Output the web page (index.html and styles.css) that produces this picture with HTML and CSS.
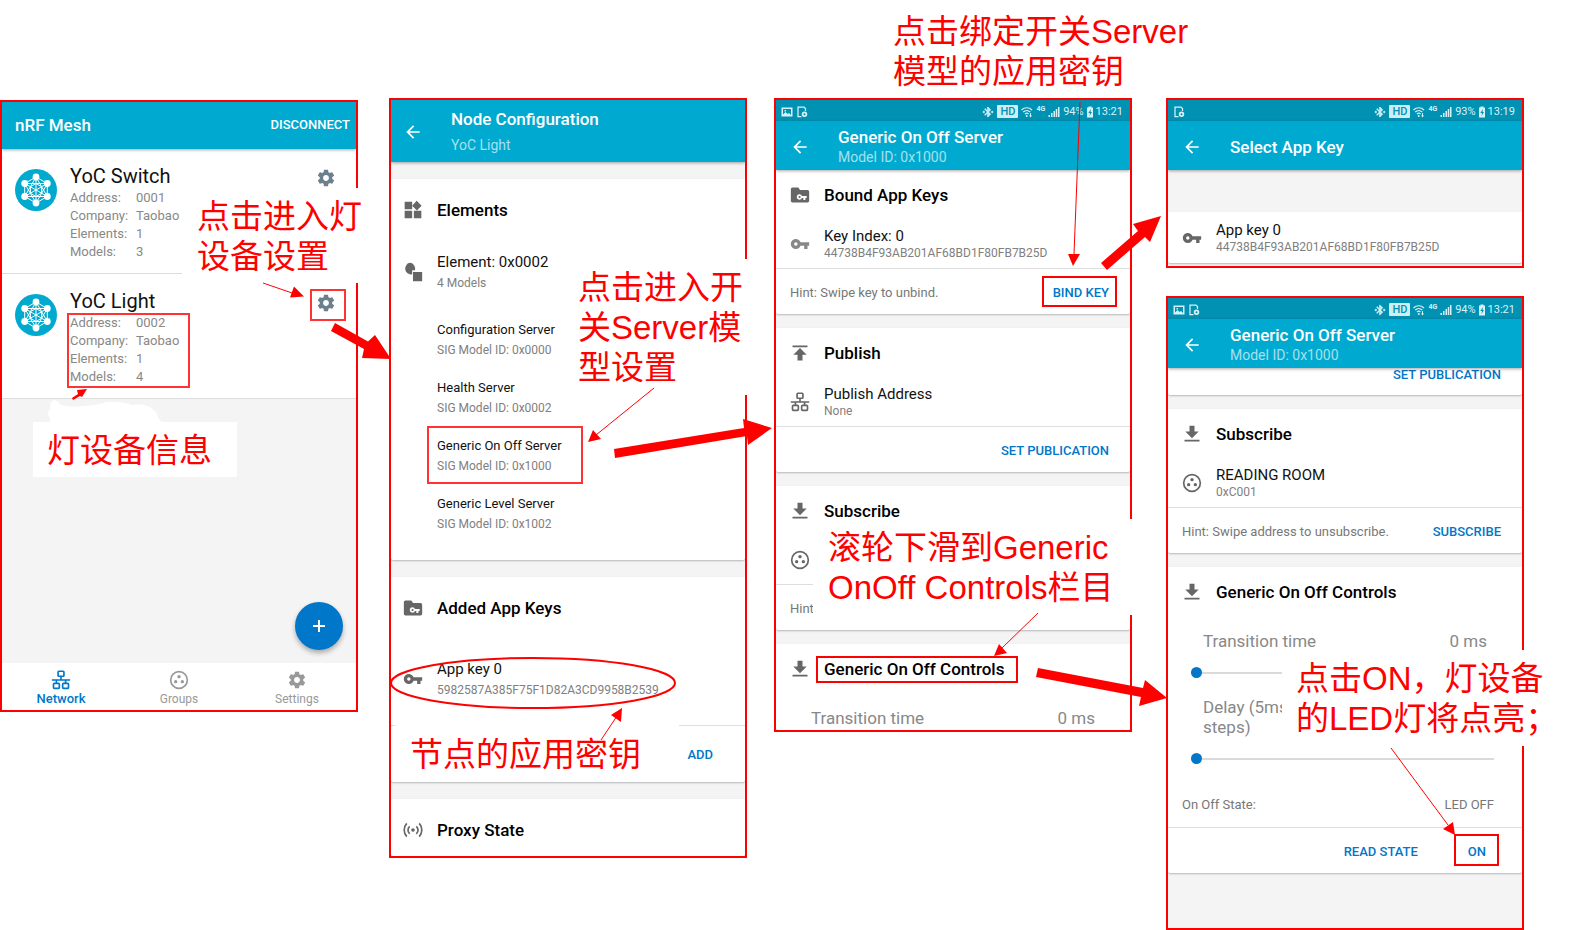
FILE: index.html
```html
<!DOCTYPE html>
<html lang="zh-CN">
<head>
<meta charset="utf-8">
<title>nRF Mesh 操作流程</title>
<link rel="stylesheet" href="styles.css">
</head>
<body>
<svg class="sprite" aria-hidden="true">
  <symbol id="gear" viewBox="0 0 24 24"><path d="M19.43 12.98c.04-.32.07-.64.07-.98s-.03-.66-.07-.98l2.11-1.65c.19-.15.24-.42.12-.64l-2-3.46c-.12-.22-.39-.3-.61-.22l-2.49 1c-.52-.4-1.08-.73-1.69-.98l-.38-2.65C14.46 2.18 14.25 2 14 2h-4c-.25 0-.46.18-.49.42l-.38 2.65c-.61.25-1.17.59-1.69.98l-2.49-1c-.23-.09-.49 0-.61.22l-2 3.46c-.13.22-.07.49.12.64l2.11 1.65c-.04.32-.07.65-.07.98s.03.66.07.98l-2.11 1.65c-.19.15-.24.42-.12.64l2 3.46c.12.22.39.3.61.22l2.49-1c.52.4 1.08.73 1.69.98l.38 2.65c.03.24.24.42.49.42h4c.25 0 .46-.18.49-.42l.38-2.65c.61-.25 1.17-.59 1.69-.98l2.49 1c.23.09.49 0 .61-.22l2-3.46c.12-.22.07-.49-.12-.64l-2.11-1.65zM12 15.5c-1.93 0-3.5-1.57-3.5-3.5s1.57-3.5 3.5-3.5 3.5 1.57 3.5 3.5-1.57 3.5-3.5 3.5z"/></symbol>
  <symbol id="key" viewBox="0 0 24 24"><path d="M12.65 10C11.83 7.67 9.61 6 7 6c-3.31 0-6 2.69-6 6s2.69 6 6 6c2.61 0 4.83-1.67 5.65-4H17v4h4v-4h2v-4H12.65zM7 14c-1.1 0-2-.9-2-2s.9-2 2-2 2 .9 2 2-.9 2-2 2z"/></symbol>
  <symbol id="folder-key" viewBox="0 0 24 24"><path fill-rule="evenodd" d="M3 3h7l2 3h9a2 2 0 0 1 2 2v11a2 2 0 0 1-2 2H3a2 2 0 0 1-2-2V5a2 2 0 0 1 2-2zm8.500 8a3.300 3.300 0 1 0 2.900 4.600H16V18h2.500v-2.400H20V13.200h-5.600A3.300 3.300 0 0 0 11.500 11zm0 2.100a1.300 1.300 0 1 1 0 2.600 1.300 1.300 0 0 1 0-2.600z"/></symbol>
  <symbol id="widgets" viewBox="0 0 24 24"><path d="M13 13v9h9v-9h-9zM2 22h9v-9H2v9zM2 2v9h9V2H2zm14.660-1.310L11 6.840 16.660 12.500l5.660-5.660-5.660-5.650z"/></symbol>
  <symbol id="shapes" viewBox="0 0 24 24"><path d="M8 1a6.500 7 0 0 1 6.300 9H11v4.600A6.500 7 0 1 1 8 1zM12 12h11v11H12z"/></symbol>
  <symbol id="publish" viewBox="0 0 24 24"><path d="M3 3v2h18V3H3zm1 11h5v7h6v-7h5l-8-8-8 8z"/></symbol>
  <symbol id="download" viewBox="0 0 24 24"><path d="M20 9h-5V2H9v7H4l8 8 8-8zM3 19v2h18v-2H3z"/></symbol>
  <symbol id="back" viewBox="0 0 24 24"><path d="M20 11H7.830l5.590-5.590L12 4l-8 8 8 8 1.410-1.410L7.830 13H20v-2z"/></symbol>
  <symbol id="network" viewBox="0 0 24 24"><g fill="none" stroke="currentColor" stroke-width="2"><rect x="8.500" y="1.500" width="7" height="6" rx="1"/><path d="M12 7.500V12M1 12h22M6.500 12v4M17.500 12v4"/><rect x="3" y="16" width="7" height="6" rx="1"/><rect x="14" y="16" width="7" height="6" rx="1"/></g></symbol>
  <symbol id="groups" viewBox="0 0 24 24"><circle cx="12" cy="12" r="10" fill="none" stroke="currentColor" stroke-width="2"/><circle cx="12" cy="8" r="2"/><circle cx="8" cy="14" r="2"/><circle cx="16" cy="14" r="2"/></symbol>
  <symbol id="proxy" viewBox="0 0 24 24"><circle cx="12" cy="12" r="2.200"/><path fill="none" stroke="currentColor" stroke-width="2" d="M8 7.500a6 6 0 0 0 0 9M16 7.500a6 6 0 0 1 0 9M4.500 4a12 12 0 0 0 0 16M19.500 4a12 12 0 0 1 0 16"/></symbol>
  <symbol id="picture" viewBox="0 0 24 24"><path fill-rule="evenodd" d="M1 3h22v18H1zm3 3v11l5-5 4 4 3-2 4 4V6zm3 2h3v3H7z"/></symbol>
  <symbol id="device" viewBox="0 0 24 24"><path fill="none" stroke="currentColor" stroke-width="2.500" d="M19 10V5l-3-3H4v19h7"/><path fill-rule="evenodd" d="M17 11a5.500 5.500 0 1 1 0 11 5.500 5.500 0 0 1 0-11zm0 3.500a2 2 0 1 0 0 4 2 2 0 0 0 0-4z"/></symbol>
  <symbol id="bluetooth" viewBox="0 0 24 24"><path stroke="currentColor" d="M17.710 7.710L12 2h-1v7.590L6.410 5 5 6.410 10.590 12 5 17.590 6.410 19 11 14.410V22h1l5.710-5.710-4.300-4.290 4.300-4.290zM13 5.830l1.880 1.880L13 9.590V5.830zm1.880 10.460L13 18.170v-3.760l1.880 1.880zM2 10.500h3v3H2zM19 10.500h3v3h-3z"/></symbol>
  <symbol id="wifi" viewBox="0 0 24 24"><path fill="none" stroke="currentColor" stroke-width="2.400" d="M1 8c6-6 15-6 21 0M4.500 12c4-4 10-4 14 0M8 16c2-2 5-2 7 0"/><circle cx="11.500" cy="20" r="2"/><path d="M18 14h2v5h2l-3 4-3-4h2z"/></symbol>
  <symbol id="signal" viewBox="0 0 24 24"><path d="M1 18h3v4H1zM6 14h3v8H6zM11 10h3v12h-3zM15.500 6h3v16h-3zM20 2h3v20h-3z"/></symbol>
  <symbol id="battery" viewBox="0 0 12 24"><path fill-rule="evenodd" d="M3 1h6v2h3v20H0V3h3zm5 5l-5.500 8H6l-1 6 5-8H7z"/></symbol>
  <symbol id="mesh" viewBox="0 0 42 42"><circle cx="21" cy="21" r="21" fill="#00a9ce"/><g fill="none" stroke="#fff" stroke-width="1"><path d="M21 8l11.300 6.500v13L21 34 9.700 27.500v-13zM21 8l11.300 19.500H9.700zM21 34L9.700 14.500h22.600zM21 8v26M9.700 14.500l22.600 13M32.300 14.500l-22.600 13"/><path d="M21 14.500l5.600 3.200v6.600L21 27.500l-5.600-3.200v-6.600z"/></g><g fill="#fff"><circle cx="21" cy="8" r="3.400"/><circle cx="32.300" cy="14.500" r="3.400"/><circle cx="32.300" cy="27.500" r="3.400"/><circle cx="21" cy="34" r="3.400"/><circle cx="9.700" cy="27.500" r="3.400"/><circle cx="9.700" cy="14.500" r="3.400"/></g></symbol>
</svg>

<main class="board">

  <section class="column column-network">
    <div class="phone">
      <header class="bar bar-home"><h1 class="bar-title">nRF Mesh</h1><button class="bar-action">DISCONNECT</button></header>
      <article class="node">
        <svg class="avatar"><use href="#mesh"/></svg>
        <div class="node-body">
          <h2 class="node-name">YoC Switch</h2>
          <dl class="facts"><dt>Address:</dt><dd>0001</dd><dt>Company:</dt><dd>Taobao</dd><dt>Elements:</dt><dd>1</dd><dt>Models:</dt><dd>3</dd></dl>
        </div>
        <button class="gear" aria-label="Configure YoC Switch"><svg class="icon"><use href="#gear"/></svg></button>
      </article>
      <article class="node">
        <svg class="avatar"><use href="#mesh"/></svg>
        <div class="node-body">
          <h2 class="node-name">YoC Light</h2>
          <dl class="facts"><dt>Address:</dt><dd>0002</dd><dt>Company:</dt><dd>Taobao</dd><dt>Elements:</dt><dd>1</dd><dt>Models:</dt><dd>4</dd></dl>
        </div>
        <button class="gear" aria-label="Configure YoC Light"><svg class="icon"><use href="#gear"/></svg></button>
      </article>
      <div class="blank">
        <button class="fab" aria-label="Add node"><svg class="fab-plus" viewBox="0 0 14 14"><path d="M7 1v12M1 7h12" stroke="#fff" stroke-width="2"/></svg></button>
      </div>
      <nav class="tabs">
        <a class="tab tab-on" href="#network"><svg class="icon"><use href="#network"/></svg>Network</a>
        <a class="tab" href="#groups"><svg class="icon"><use href="#groups"/></svg>Groups</a>
        <a class="tab" href="#settings"><svg class="icon"><use href="#gear"/></svg>Settings</a>
      </nav>
    </div>
    <p class="note note-enter">点击进入灯<br>设备设置</p>
    <p class="note note-info">灯设备信息</p>
    <svg class="marks" width="358" height="930" viewBox="0 0 358 930">
      <path class="smudge" d="M50 423v-5q-4-4 0-9 0-8 4-9 5 1 6 5 12 3 24 1 14-1 22-4 14-1 26 3 16-2 23 6 3 5 3 7 3 2 4 5z"/>
      <rect class="frame soft" x="311" y="290" width="34" height="30"/>
      <rect class="frame soft" x="68" y="314" width="121" height="73"/>
      <path class="line" d="M263 283l32 11"/><path class="head" d="M304 296.500l-14 1 4-11z"/>
      <path class="head" d="M73 400l-1-2 6-4-1-4 10-1-5 8-2-1z"/>
      <path class="head" d="M335 323l33 18.500 7-6.500 16 24-29-1 2-9-33-18z"/>
    </svg>
  </section>

  <section class="column column-node">
    <div class="phone roomy">
      <header class="bar bar-tall"><button class="back" aria-label="Back"><svg class="icon"><use href="#back"/></svg></button><div class="bar-text"><h1 class="bar-title">Node Configuration</h1><p class="bar-sub">YoC Light</p></div></header>
      <div class="card">
        <div class="card-head"><svg class="icon"><use href="#widgets"/></svg><h2>Elements</h2></div>
        <div class="item item-element"><svg class="icon"><use href="#shapes"/></svg><div><p class="primary">Element: 0x0002</p><p class="secondary">4 Models</p></div></div>
        <ul class="models">
          <li><p class="model">Configuration Server</p><p class="secondary">SIG Model ID: 0x0000</p></li>
          <li><p class="model">Health Server</p><p class="secondary">SIG Model ID: 0x0002</p></li>
          <li><p class="model">Generic On Off Server</p><p class="secondary">SIG Model ID: 0x1000</p></li>
          <li><p class="model">Generic Level Server</p><p class="secondary">SIG Model ID: 0x1002</p></li>
        </ul>
      </div>
      <div class="card">
        <div class="card-head"><svg class="icon"><use href="#folder-key"/></svg><h2>Added App Keys</h2></div>
        <div class="item item-key"><svg class="icon"><use href="#key"/></svg><div><p class="primary">App key 0</p><p class="secondary">5982587A385F75F1D82A3CD9958B2539</p></div></div>
        <div class="card-foot"><button class="action">ADD</button></div>
      </div>
      <div class="card card-cut">
        <div class="card-head"><svg class="icon"><use href="#proxy"/></svg><h2>Proxy State</h2></div>
      </div>
    </div>
    <p class="note note-model">点击进入开<br>关Server模<br>型设置</p>
    <p class="note note-appkey">节点的应用密钥</p>
    <svg class="marks" width="358" height="930" viewBox="389 0 358 930">
      <rect class="frame soft" x="428" y="427" width="154" height="56"/>
      <ellipse class="frame" cx="533" cy="683" rx="142" ry="25"/>
      <path class="line" d="M654 388l-58 47"/><path class="head" d="M588 442l5-12 8 9z"/>
      <path class="line" d="M601 740l16-24"/><path class="head" d="M622 708l-1 14-10-7z"/>
      <path class="head" d="M614 449l130-21-1-9 29 9-24 17-1-9-132 22z"/>
    </svg>
  </section>

  <section class="column column-server">
    <div class="phone">
      <div class="status"><svg class="icon"><use href="#picture"/></svg><svg class="icon"><use href="#device"/></svg><span class="status-gap"></span><svg class="icon"><use href="#bluetooth"/></svg><span class="hd">HD</span><svg class="icon"><use href="#wifi"/></svg><span class="net">4G</span><svg class="icon"><use href="#signal"/></svg><span>94%</span><svg class="icon cell"><use href="#battery"/></svg><span>13:21</span></div>
      <header class="bar"><button class="back" aria-label="Back"><svg class="icon"><use href="#back"/></svg></button><div class="bar-text"><h1 class="bar-title">Generic On Off Server</h1><p class="bar-sub">Model ID: 0x1000</p></div></header>
      <div class="card">
        <div class="card-head"><svg class="icon"><use href="#folder-key"/></svg><h2>Bound App Keys</h2></div>
        <div class="item"><svg class="icon pale"><use href="#key"/></svg><div><p class="primary">Key Index: 0</p><p class="secondary">44738B4F93AB201AF68BD1F80FB7B25D</p></div></div>
        <div class="card-foot"><p class="hint">Hint: Swipe key to unbind.</p><button class="action">BIND KEY</button></div>
      </div>
      <div class="card">
        <div class="card-head"><svg class="icon"><use href="#publish"/></svg><h2>Publish</h2></div>
        <div class="item"><svg class="icon"><use href="#network"/></svg><div><p class="primary">Publish Address</p><p class="secondary">None</p></div></div>
        <div class="card-foot"><button class="action">SET PUBLICATION</button></div>
      </div>
      <div class="card">
        <div class="card-head"><svg class="icon"><use href="#download"/></svg><h2>Subscribe</h2></div>
        <div class="item"><svg class="icon"><use href="#groups"/></svg></div>
        <div class="card-foot"><p class="hint">Hint</p></div>
      </div>
      <div class="card card-cut">
        <div class="card-head"><svg class="icon"><use href="#download"/></svg><h2>Generic On Off Controls</h2></div>
        <div class="setting"><span>Transition time</span><output>0 ms</output></div>
      </div>
    </div>
    <p class="note note-bind">点击绑定开关Server<br>模型的应用密钥</p>
    <p class="note note-scroll">滚轮下滑到Generic<br>OnOff Controls栏目</p>
    <svg class="marks" width="358" height="930" viewBox="774 0 358 930">
      <rect class="frame" x="1043" y="277" width="73" height="29"/>
      <rect class="frame" x="817" y="657" width="200" height="25"/>
      <path class="line" d="M1080 102l-6 152"/><path class="head" d="M1073 266l-5-12h12z"/>
      <path class="line" d="M1038 613l-36 35"/><path class="head" d="M994 656l5-12 8 9z"/>
      <path class="head" d="M1101 263l37-32-5-7 28-8-11 26-5-5-38 33z"/>
      <path class="head" d="M1038 668l105 20 2-8 22 18-28 8 2-9-105-20z"/>
    </svg>
  </section>

  <section class="column column-result">
    <div class="phone">
      <div class="status"><svg class="icon"><use href="#device"/></svg><span class="status-gap"></span><svg class="icon"><use href="#bluetooth"/></svg><span class="hd">HD</span><svg class="icon"><use href="#wifi"/></svg><span class="net">4G</span><svg class="icon"><use href="#signal"/></svg><span>93%</span><svg class="icon cell"><use href="#battery"/></svg><span>13:19</span></div>
      <header class="bar"><button class="back" aria-label="Back"><svg class="icon"><use href="#back"/></svg></button><div class="bar-text"><h1 class="bar-title">Select App Key</h1></div></header>
      <div class="card card-pick">
        <div class="item"><svg class="icon"><use href="#key"/></svg><div><p class="primary">App key 0</p><p class="secondary">44738B4F93AB201AF68BD1F80FB7B25D</p></div></div>
      </div>
    </div>
    <div class="phone">
      <div class="status"><svg class="icon"><use href="#picture"/></svg><svg class="icon"><use href="#device"/></svg><span class="status-gap"></span><svg class="icon"><use href="#bluetooth"/></svg><span class="hd">HD</span><svg class="icon"><use href="#wifi"/></svg><span class="net">4G</span><svg class="icon"><use href="#signal"/></svg><span>94%</span><svg class="icon cell"><use href="#battery"/></svg><span>13:21</span></div>
      <header class="bar"><button class="back" aria-label="Back"><svg class="icon"><use href="#back"/></svg></button><div class="bar-text"><h1 class="bar-title">Generic On Off Server</h1><p class="bar-sub">Model ID: 0x1000</p></div></header>
      <div class="card card-scrolled"><button class="action">SET PUBLICATION</button></div>
      <div class="card">
        <div class="card-head"><svg class="icon"><use href="#download"/></svg><h2>Subscribe</h2></div>
        <div class="item"><svg class="icon"><use href="#groups"/></svg><div><p class="primary">READING ROOM</p><p class="secondary">0xC001</p></div></div>
        <div class="card-foot"><p class="hint">Hint: Swipe address to unsubscribe.</p><button class="action">SUBSCRIBE</button></div>
      </div>
      <div class="card">
        <div class="card-head"><svg class="icon"><use href="#download"/></svg><h2>Generic On Off Controls</h2></div>
        <div class="setting"><label for="transition">Transition time</label><output>0 ms</output></div>
        <input class="slider" id="transition" type="range" min="0" max="100" value="0">
        <div class="setting setting-delay"><label for="delay">Delay (5ms steps)</label></div>
        <input class="slider" id="delay" type="range" min="0" max="100" value="0">
        <div class="state"><span>On Off State:</span><output>LED OFF</output></div>
        <div class="card-foot foot-wide"><button class="action">READ STATE</button><button class="action">ON</button></div>
      </div>
      <div class="tail"></div>
    </div>
    <p class="note note-on">点击ON，灯设备<br>的LED灯将点亮；</p>
    <svg class="marks" width="358" height="930" viewBox="1166 0 358 930">
      <rect class="frame" x="1455" y="835" width="43" height="30"/>
      <path class="line" d="M1391 748l57 77"/><path class="head" d="M1455 835l-12-6 10-7z"/>
    </svg>
  </section>

</main>
</body>
</html>
```
FILE: styles.css
```css
* { box-sizing: border-box; }
body { margin: 0; background: #fff; font-family: Roboto, "Noto Sans CJK SC", sans-serif; font-size: 13px; color: #111; }
h1, h2, p, dl, dd, ul { margin: 0; padding: 0; }
ul { list-style: none; }
button { margin: 0; padding: 0; border: 0; background: none; font: inherit; color: inherit; cursor: pointer; }
.sprite { position: absolute; width: 0; height: 0; overflow: hidden; }
.icon { display: block; flex: none; width: 20px; height: 20px; fill: currentColor; color: #666; }
.icon.pale { color: #888; }

.board { display: grid; grid-template-columns: repeat(4, minmax(0, 1fr)); column-gap: 31px; padding-right: 57px; align-items: start; overflow: hidden; }
.column { position: relative; display: flex; flex-direction: column; gap: 28px; padding-top: 98px; }
.column-network { padding-top: 100px; }
.column-server { margin: 0 4px 0 -4px; }
.column-result { margin: 0 1px 0 -1px; }

.phone { border: 2px solid #f00; background: #f4f4f4; overflow: hidden; }

.status { display: flex; align-items: center; gap: 3px; height: 21px; padding: 2px 7px 0 5px; background: #0091b3; color: #d9f1f7; font-size: 11px; }
.status .icon { width: 12px; height: 12px; color: #d9f1f7; }
.status .cell { width: 6px; }
.status-gap { flex: 1; }
.hd { padding: 0 3px; border-radius: 1px; background: #d0edf5; color: #0091b3; font-weight: 500; line-height: 13px; }
.net { align-self: flex-start; font-size: 7px; font-weight: 700; line-height: 14px; }

.bar { position: relative; display: flex; align-items: center; gap: 28px; height: 49px; padding: 2px 14px 0; background: #00a9d0; color: #fff; box-shadow: 0 1px 3px rgba(0, 0, 0, .35); }
.bar-title { font-size: 17px; font-weight: 500; line-height: 20px; }
.bar-sub { font-size: 14px; line-height: 20px; color: #a6e0ee; }
.back .icon { color: #fff; }
.bar-home { height: 47px; justify-content: space-between; padding: 0 6px 2px 13px; }
.bar-action { font-size: 13px; font-weight: 500; }
.bar-tall { height: 62px; padding-left: 12px; }
.bar-tall .bar-text { display: grid; gap: 6px; }

.node { display: flex; align-items: flex-start; gap: 13px; padding: 15px 20px 12px 13px; border-bottom: 1px solid #ddd; background: #fff; }
.avatar { flex: none; width: 42px; height: 42px; margin-top: 5px; }
.node-body { flex: 1; }
.node-name { font-size: 20px; font-weight: 400; line-height: 24px; }
.facts { display: grid; grid-template-columns: 66px auto; line-height: 18px; padding-top: 1px; color: #888; }
.gear { margin-top: 4px; }
.gear .icon { color: #6b7f8c; }
.blank { position: relative; min-height: 264px; }
.fab { position: absolute; right: 13px; bottom: 13px; display: grid; place-items: center; width: 48px; height: 48px; border-radius: 50%; background: #0077c8; box-shadow: 0 3px 5px rgba(0, 0, 0, .3); }
.fab-plus { width: 14px; height: 14px; }
.tabs { display: grid; grid-template-columns: repeat(3, 1fr); height: 47px; background: #fff; }
.tab { display: flex; flex-direction: column; align-items: center; padding-top: 7px; gap: 1px; color: #999; font-size: 12px; line-height: 16px; text-decoration: none; }
.tab .icon { color: #999; }
.tab-on { color: #0077c8; font-size: 13px; font-weight: 500; }
.tab-on .icon { color: #0077c8; }

.card { margin-bottom: 14px; background: #fff; border-radius: 0 0 2px 2px; box-shadow: 0 1px 2px rgba(0, 0, 0, .25); }
.card-cut { margin-bottom: 0; }
.card-head { display: flex; align-items: center; gap: 14px; height: 50px; padding-left: 14px; }
.card-head h2 { font-size: 17px; font-weight: 500; color: #000; }
.item { display: flex; align-items: center; gap: 14px; height: 48px; padding: 0 14px; }
.primary { font-size: 15px; line-height: 18px; color: #111; }
.secondary { font-size: 12px; line-height: 16px; color: #808080; }
.card-foot { display: flex; align-items: center; justify-content: flex-end; height: 46px; padding: 2px 21px 0 14px; border-top: 1px solid #ddd; }
.hint { flex: 1; color: #777; }
.action { color: #0077c8; font-size: 13px; font-weight: 500; line-height: 12px; }

.roomy .card { margin-bottom: 17px; }
.roomy .bar { margin-bottom: 17px; }
.roomy .card-cut { margin-bottom: 0; }
.roomy .card-head { height: 62px; padding-left: 12px; }
.roomy .card-cut .card-head { height: 57px; padding-top: 5px; }
.roomy .primary { line-height: 22px; }
.roomy .secondary { line-height: 20px; }
.item-element { height: 70px; padding: 0 12px 8px; }
.item-key { height: 86px; padding: 0 12px 6px; }
.models { padding: 0 0 17px 46px; }
.models li { padding: 9px 0; }
.model { line-height: 20px; }
.roomy .card-foot { height: 57px; padding-right: 32px; }

.card-pick { margin: 42px 0 3px; }
.card-pick .item { height: 51px; }
.card-scrolled { display: flex; align-items: flex-start; justify-content: flex-end; height: 27px; padding: 1px 21px 0; }
.setting { display: flex; justify-content: space-between; padding: 12px 35px 0; color: #888; font-size: 17px; line-height: 24px; }
.setting-delay { padding-top: 14px; line-height: 20px; }
.setting-delay label { width: 100px; }
.slider { display: block; appearance: none; width: calc(100% - 51px); height: 20px; margin: 10px 28px 0 23px; background: none; }
.setting-delay + .slider { margin-top: 12px; }
.slider::-webkit-slider-runnable-track { height: 2px; background: #dadada; }
.slider::-webkit-slider-thumb { appearance: none; width: 11px; height: 11px; margin-top: -5px; border: 0; border-radius: 50%; background: #0077c8; }
.state { display: flex; justify-content: space-between; padding: 27px 28px 13px 14px; line-height: 18px; color: #777; }
.foot-wide { gap: 50px; padding-right: 36px; }
.tail { height: 41px; }

.note { position: absolute; z-index: 1; background: #fff; color: #f00; font: 33px/40px "Liberation Sans", "Noto Sans CJK SC", sans-serif; white-space: nowrap; }
.note-enter { left: 182px; top: 188px; padding: 9px 0 6px 15px; }
.note-info { left: 33px; top: 422px; padding: 9px 25px 6px 14px; }
.note-model { left: 183px; top: 259px; padding: 9px 5px 7px 6px; }
.note-appkey { left: 6px; top: 724px; padding: 11px 38px 1px 15px; }
.note-bind { left: 119px; top: 12px; }
.note-scroll { left: 39px; top: 519px; padding: 9px 30px 7px 15px; }
.note-on { left: 116px; top: 650px; padding: 9px 4px 7px 14px; }
.marks { position: absolute; z-index: 2; left: 0; top: 0; overflow: visible; pointer-events: none; }
.frame { fill: none; stroke: #f00; stroke-width: 2; }
.soft { stroke: #f33; }
.line { fill: none; stroke: #f00; stroke-width: 1; }
.head { fill: #f00; }
.smudge { fill: #fff; }
```
